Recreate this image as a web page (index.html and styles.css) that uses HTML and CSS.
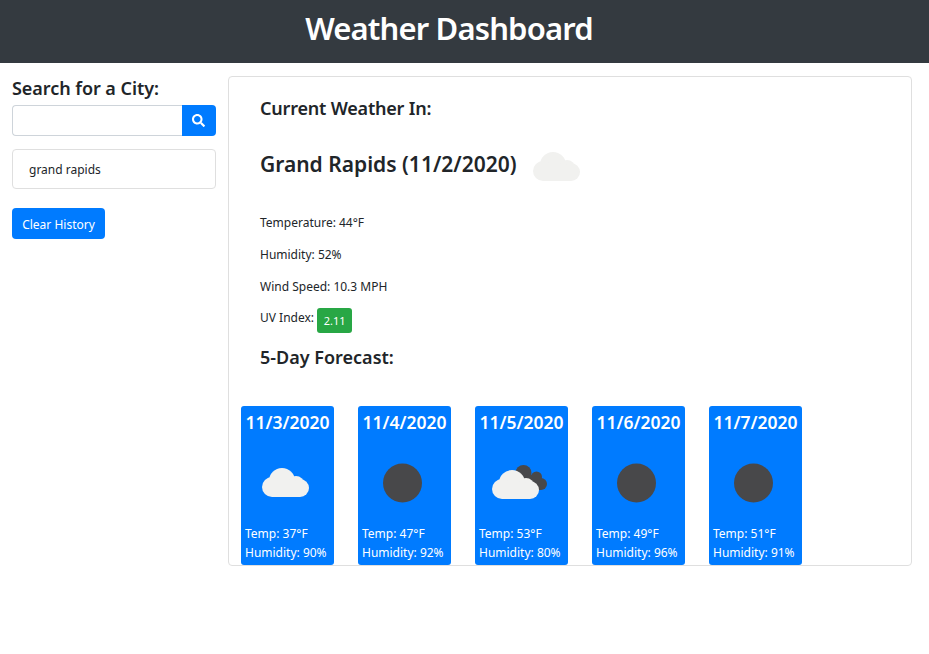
FILE: index.html
```html
<!DOCTYPE html>
<html lang="en">
<head>
  <meta charset="UTF-8">
  <meta name="viewport" content="width=device-width, initial-scale=1.0">
  <title>Weather Dashboard</title>
  <link rel="stylesheet" href="styles.css">
</head>
<body>
  <svg class="defs" width="0" height="0">
    <symbol id="cloud" viewBox="0 0 80 80">
      <g fill="#f1f1ef">
        <circle cx="37" cy="38" r="13"/>
        <circle cx="51" cy="41" r="8"/>
        <circle cx="27" cy="44" r="10"/>
        <circle cx="55" cy="45" r="9"/>
        <rect x="27" y="40" width="28" height="14"/>
      </g>
    </symbol>
    <symbol id="sun" viewBox="0 0 80 80">
      <circle cx="40.5" cy="40" r="19.5" fill="#48484a"/>
    </symbol>
    <symbol id="cloud-dark" viewBox="0 0 80 80">
      <g fill="#48484a">
        <circle cx="44.5" cy="30" r="8"/>
        <circle cx="57.5" cy="34" r="5.5"/>
        <circle cx="62" cy="41" r="6"/>
        <rect x="44" y="32" width="18" height="15"/>
      </g>
      <g fill="#f1f1ef">
        <circle cx="33" cy="40" r="13"/>
        <circle cx="47" cy="43" r="8"/>
        <circle cx="23" cy="46" r="10"/>
        <circle cx="51" cy="47" r="9"/>
        <rect x="23" y="42" width="28" height="14"/>
      </g>
    </symbol>
  </svg>

  <header class="top-bar">
    <h1>Weather Dashboard</h1>
  </header>

  <main class="layout">
    <aside class="sidebar">
      <h2 class="search-title">Search for a City:</h2>
      <div class="search-group">
        <input class="search-input" type="text">
        <button class="search-btn" aria-label="Search">
          <svg width="13" height="13" viewBox="0 0 512 512"><path fill="#fff" d="M505 442.7L405.3 343c-4.5-4.5-10.6-7-17-7H372c27.6-35.3 44-79.7 44-128C416 93.1 322.9 0 208 0S0 93.1 0 208s93.1 208 208 208c48.3 0 92.7-16.4 128-44v16.3c0 6.4 2.5 12.5 7 17l99.7 99.7c9.4 9.4 24.6 9.4 33.9 0l28.3-28.3c9.4-9.4 9.4-24.6.1-34zM208 336c-70.7 0-128-57.2-128-128 0-70.7 57.2-128 128-128 70.7 0 128 57.2 128 128 0 70.7-57.2 128-128 128z"/></svg>
        </button>
      </div>
      <div class="history-item">grand rapids</div>
      <button class="clear-btn">Clear History</button>
    </aside>

    <section class="weather-card">
      <div class="current">
        <h2 class="current-label">Current Weather In:</h2>
        <div class="city-row">
          <h2 class="city-name">Grand Rapids (11/2/2020)</h2>
          <svg class="icon" width="80" height="80"><use href="#cloud"/></svg>
        </div>
        <p class="stat">Temperature: 44°F</p>
        <p class="stat">Humidity: 52%</p>
        <p class="stat">Wind Speed: 10.3 MPH</p>
        <p class="stat stat-uv">UV Index: <span class="uv-badge">2.11</span></p>
        <h2 class="forecast-label">5-Day Forecast:</h2>
      </div>
      <div class="forecast">
        <div class="day">
          <h3 class="day-date">11/3/2020</h3>
          <svg class="icon" width="80" height="80"><use href="#cloud"/></svg>
          <p class="day-line">Temp: 37°F</p>
          <p class="day-line">Humidity: 90%</p>
        </div>
        <div class="day">
          <h3 class="day-date">11/4/2020</h3>
          <svg class="icon" width="80" height="80"><use href="#sun"/></svg>
          <p class="day-line">Temp: 47°F</p>
          <p class="day-line">Humidity: 92%</p>
        </div>
        <div class="day">
          <h3 class="day-date">11/5/2020</h3>
          <svg class="icon" width="80" height="80"><use href="#cloud-dark"/></svg>
          <p class="day-line">Temp: 53°F</p>
          <p class="day-line">Humidity: 80%</p>
        </div>
        <div class="day">
          <h3 class="day-date">11/6/2020</h3>
          <svg class="icon" width="80" height="80"><use href="#sun"/></svg>
          <p class="day-line">Temp: 49°F</p>
          <p class="day-line">Humidity: 96%</p>
        </div>
        <div class="day">
          <h3 class="day-date">11/7/2020</h3>
          <svg class="icon" width="80" height="80"><use href="#sun"/></svg>
          <p class="day-line">Temp: 51°F</p>
          <p class="day-line">Humidity: 91%</p>
        </div>
      </div>
    </section>
  </main>
</body>
</html>
```

FILE: styles.css
```css
* {
  box-sizing: border-box;
}
body {
  margin: 0;
  font-family: "Noto Sans", "Open Sans", sans-serif;
  font-size: 12px;
  color: #212529;
  background: #fff;
}
h1, h2, h3, p {
  margin: 0;
}
.defs {
  display: block;
  height: 0;
}
.icon {
  display: block;
  flex: none;
}

.top-bar {
  height: 63px;
  padding-right: 31px;
  background: #343a40;
  color: #fff;
  text-align: center;
}
.top-bar h1 {
  font-size: 31px;
  font-weight: 600;
  letter-spacing: -0.85px;
  line-height: 57px;
}

.layout {
  display: flex;
  gap: 12px;
  padding: 13px 17px 0 12px;
}

.sidebar {
  width: 204px;
  flex: none;
}
.search-title {
  font-size: 18px;
  font-weight: 600;
  letter-spacing: -0.05px;
  line-height: 25px;
  margin-bottom: 4px;
}
.search-group {
  display: flex;
  height: 31px;
}
.search-input {
  flex: 1;
  min-width: 0;
  border: 1px solid #ced4da;
  border-right: none;
  border-radius: 4px 0 0 4px;
  background: #fff;
}
.search-btn {
  width: 34px;
  padding: 0 2px 0 0;
  border: none;
  border-radius: 0 4px 4px 0;
  background: #007bff;
  display: flex;
  align-items: center;
  justify-content: center;
}
.history-item {
  height: 40px;
  margin-top: 13px;
  padding-left: 16px;
  border: 1px solid #dfdfdf;
  border-radius: 4px;
  line-height: 39px;
}
.clear-btn {
  display: block;
  width: 93px;
  height: 31px;
  margin-top: 19px;
  padding: 2px 0 0;
  border: none;
  border-radius: 4px;
  background: #007bff;
  color: #fff;
  font-family: inherit;
  font-size: 12px;
}

.weather-card {
  flex: 1;
  height: 490px;
  padding: 0 12px;
  border: 1px solid #dfdfdf;
  border-radius: 4px;
}
.current {
  padding: 19px 0 0 19px;
}
.current-label,
.forecast-label {
  font-size: 18px;
  font-weight: 600;
  line-height: 24px;
}
.current-label {
  letter-spacing: -0.2px;
}
.city-row {
  display: flex;
  align-items: center;
  height: 80px;
  margin-top: 7px;
}
.city-name {
  width: 256px;
  padding-bottom: 7px;
  font-size: 21px;
  font-weight: 600;
  white-space: nowrap;
}
.stat {
  line-height: 20px;
  margin-bottom: 12px;
}
.stat:first-of-type {
  margin-top: 6px;
}
.stat-uv {
  display: flex;
  align-items: flex-start;
  gap: 3px;
  height: 25px;
  margin-top: -1px;
  margin-bottom: 12px;
}
.uv-badge {
  width: 35px;
  height: 25px;
  border-radius: 3px;
  background: #28a745;
  color: #fff;
  font-size: 11px;
  line-height: 25px;
  text-align: center;
}

.forecast {
  display: flex;
  gap: 24px;
  margin-top: 37px;
}
.day {
  width: 93px;
  height: 159px;
  padding: 4px;
  border-radius: 3px;
  background: #007bff;
  color: #fff;
}
.day-date {
  font-size: 17.5px;
  font-weight: 600;
  line-height: 24px;
  white-space: nowrap;
  text-align: center;
}
.day .icon {
  margin: 9px 0 1px;
}
.day-line {
  font-size: 12px;
  line-height: 19px;
  white-space: nowrap;
}
```
